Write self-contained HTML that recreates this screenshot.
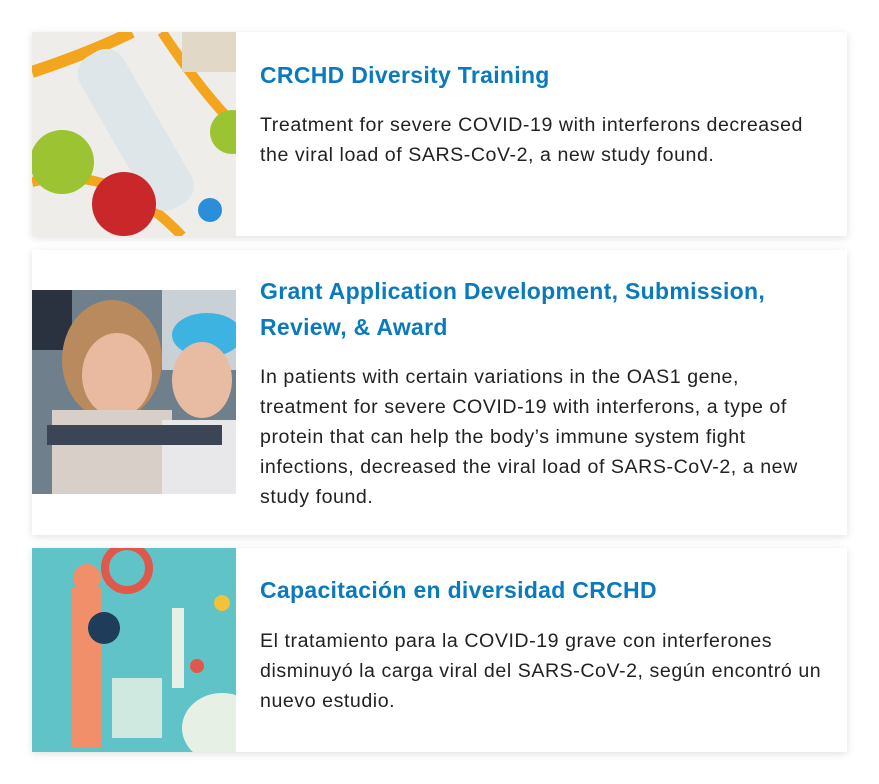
<!DOCTYPE html>
<html><head><style>
body{margin:0;background:#fff;width:879px;height:784px;position:relative;font-family:"Liberation Sans",sans-serif;}
.card{position:absolute;left:32px;width:815px;background:#fff;box-shadow:0 2px 8px rgba(0,0,0,0.12);}
.img{position:absolute;left:0;width:204px;height:204px;overflow:hidden;}
.txt{position:absolute;left:228px;right:0px;white-space:nowrap;}
h2{margin:0;color:#0a7abf;font-size:23px;font-weight:bold;line-height:36px;letter-spacing:0.3px;}
p{margin:17px 0 0;color:#222;font-size:19.6px;line-height:30px;letter-spacing:0.55px;}
</style></head><body>
<div class="card" style="top:32px;height:204px">
 <div class="img" style="top:0;background:#ecebe8">
  <svg width="204" height="204"><rect width="204" height="204" fill="#eeede9"/>
  <path d="M0 40 Q60 20 100 0" stroke="#f3a51e" stroke-width="12" fill="none"/>
  <path d="M130 0 Q170 60 200 90" stroke="#f3a51e" stroke-width="10" fill="none"/>
  <path d="M0 150 Q80 130 150 204" stroke="#f3a51e" stroke-width="10" fill="none"/>
  <rect x="80" y="10" width="50" height="175" rx="20" fill="#dfe6ea" transform="rotate(-30 105 100)"/>
  <circle cx="30" cy="130" r="32" fill="#9cc432"/>
  <circle cx="92" cy="172" r="32" fill="#c9272a"/>
  <circle cx="200" cy="100" r="22" fill="#9cc432"/>
  <circle cx="178" cy="178" r="12" fill="#2a8fd8"/>
  <rect x="150" y="0" width="54" height="40" fill="#e2d8c8"/>
  </svg></div>
 <div class="txt" style="top:25px"><h2>CRCHD Diversity Training</h2>
 <p>Treatment for severe COVID-19 with interferons decreased<br>the viral load of SARS-CoV-2, a new study found.</p></div>
</div>
<div class="card" style="top:250px;height:285px">
 <div class="img" style="top:40px">
  <svg width="204" height="204"><rect width="204" height="204" fill="#6f7f8c"/>
  <rect x="130" y="0" width="74" height="80" fill="#c9d0d6"/>
  <rect x="0" y="0" width="40" height="60" fill="#2a3240"/>
  <ellipse cx="80" cy="70" rx="50" ry="60" fill="#b98a5e"/>
  <ellipse cx="85" cy="85" rx="35" ry="42" fill="#e9b9a0"/>
  <rect x="20" y="120" width="120" height="84" fill="#d8d0c8"/>
  <ellipse cx="175" cy="45" rx="35" ry="22" fill="#3cb3e0"/>
  <ellipse cx="170" cy="90" rx="30" ry="38" fill="#e8bca3"/>
  <rect x="130" y="130" width="74" height="74" fill="#e8e8ea"/>
  <rect x="15" y="135" width="175" height="20" fill="#3b4556"/>
  </svg></div>
 <div class="txt" style="top:23px"><h2>Grant Application Development, Submission,<br>Review, &amp; Award</h2>
 <p style="margin-top:17px">In patients with certain variations in the OAS1 gene,<br>treatment for severe COVID-19 with interferons, a type of<br>protein that can help the body’s immune system fight<br>infections, decreased the viral load of SARS-CoV-2, a new<br>study found.</p></div>
</div>
<div class="card" style="top:548px;height:204px">
 <div class="img" style="top:0">
  <svg width="204" height="204"><rect width="204" height="204" fill="#5fc3c8"/>
  <circle cx="95" cy="20" r="22" fill="none" stroke="#e0584a" stroke-width="8"/>
  <path d="M40 40 h30 v160 h-30 z" fill="#f08f6a"/>
  <circle cx="55" cy="30" r="14" fill="#f08f6a"/>
  <circle cx="72" cy="80" r="16" fill="#1f3d5a"/>
  <rect x="80" y="130" width="50" height="60" fill="#cfe8e0"/>
  <circle cx="190" cy="55" r="8" fill="#f2c23a"/>
  <circle cx="165" cy="118" r="7" fill="#e0584a"/>
  <ellipse cx="190" cy="180" rx="40" ry="35" fill="#e7f0e4"/>
  <rect x="140" y="60" width="12" height="80" fill="#e7f0e4"/>
  </svg></div>
 <div class="txt" style="top:24px"><h2>Capacitación en diversidad CRCHD</h2>
 <p style="margin-top:18px">El tratamiento para la COVID-19 grave con interferones<br>disminuyó la carga viral del SARS-CoV-2, según encontró un<br>nuevo estudio.</p></div>
</div>
</body></html>
